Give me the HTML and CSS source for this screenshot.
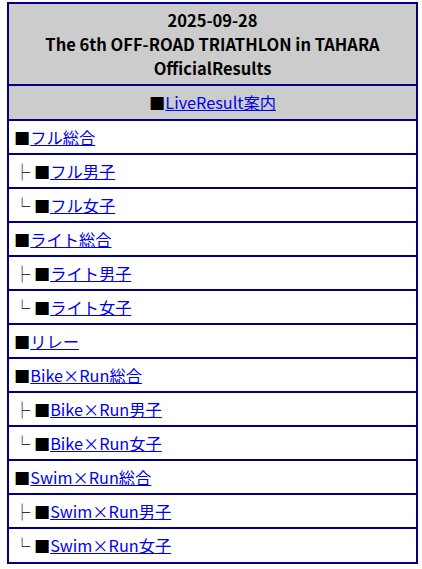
FILE: index.html
```html
<!DOCTYPE html>
<html lang="ja">
  <head>
    <meta charset="UTF-8" />
    <meta name="viewport" content="width=device-width, initial-scale=1.0" />
    <title>OFF-ROAD TRIATHLON in TAHARA OfficialResults</title>
    <link rel="stylesheet" href="styles.css">
  </head>
  <body>
    <table class="results">
      <tr>
        <th class="title">2025-09-28<br />The 6th OFF-ROAD TRIATHLON in TAHARA<br />OfficialResults</th>
      </tr>
      <tr>
        <td class="live">■<a href="#">LiveResult案内</a></td>
      </tr>
      <tr><td>■<a href="#">フル総合</a></td></tr>
      <tr><td class="sub">├ ■<a href="#">フル男子</a></td></tr>
      <tr><td class="sub">└ ■<a href="#">フル女子</a></td></tr>
      <tr><td>■<a href="#">ライト総合</a></td></tr>
      <tr><td class="sub">├ ■<a href="#">ライト男子</a></td></tr>
      <tr><td class="sub">└ ■<a href="#">ライト女子</a></td></tr>
      <tr><td>■<a href="#">リレー</a></td></tr>
      <tr><td>■<a href="#">Bike×Run総合</a></td></tr>
      <tr><td class="sub">├ ■<a href="#">Bike×Run男子</a></td></tr>
      <tr><td class="sub">└ ■<a href="#">Bike×Run女子</a></td></tr>
      <tr><td>■<a href="#">Swim×Run総合</a></td></tr>
      <tr><td class="sub">├ ■<a href="#">Swim×Run男子</a></td></tr>
      <tr><td class="sub">└ ■<a href="#">Swim×Run女子</a></td></tr>
    </table>
  </body>
</html>
```

FILE: styles.css
```css
body {
  margin: 0;
  padding: 2px 0 0 7px;
  background-color: #ffffff;
  font-family: "Noto Sans CJK JP", "Noto Sans", sans-serif;
  font-size: 16.25px;
  color: #000000;
}

.results {
  width: 411px;
  border: 2px solid #000080;
  border-collapse: separate;
  border-spacing: 0;
}

.results th,
.results td {
  border-top: 2px solid #000080;
  padding: 4px 5px;
  line-height: 24px;
  text-align: left;
}

.results tr:first-child th {
  border-top: 0;
}

.results tr:last-child td {
  padding-bottom: 5px;
}

.title {
  background-color: #cccccc;
  font-size: 16.5px;
  font-weight: bold;
  text-align: center !important;
}

.live {
  background-color: #cccccc;
  padding-bottom: 5px !important;
  text-align: center !important;
}

a {
  color: #0000ee;
}
```
